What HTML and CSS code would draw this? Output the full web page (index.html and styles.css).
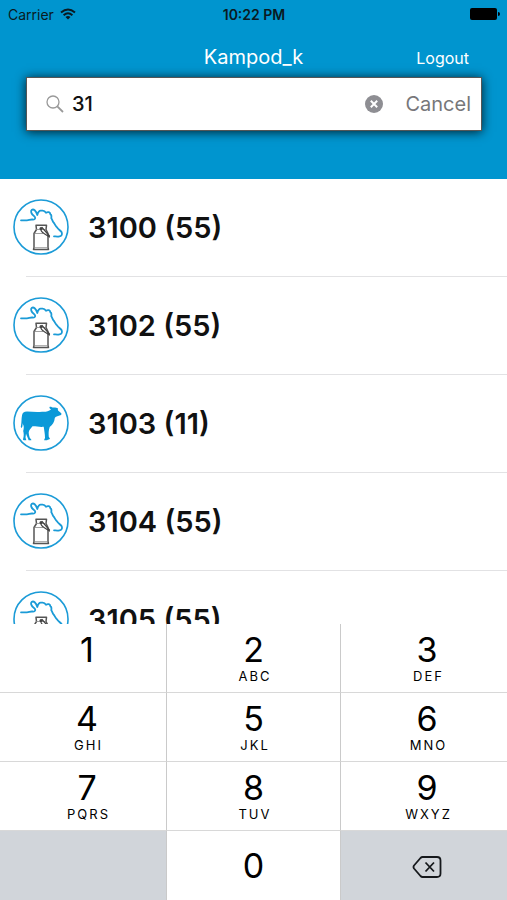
FILE: index.html
```html
<!DOCTYPE html>
<html lang="en">
<head>
    <meta charset="UTF-8">
    <meta name="viewport" content="width=device-width, initial-scale=1.0">
    <title>Kampod_k</title>
    <link rel="stylesheet" href="styles.css">
</head>
<body>

    <!-- Shared animal icons -->
    <svg class="icon-defs" aria-hidden="true">
        <symbol id="icon-milk" viewBox="0 0 56 56">
            <circle cx="28" cy="28" r="27" fill="#fff" stroke="#1b9bd7" stroke-width="1.6"/>
            <path d="M8 21.3H14C16 21.3 17 20.300 19.500 20.500C22.500 20.800 23 18.500 21 17C18 15 17.500 12 18.700 11C20.500 9.500 23 11.500 24.300 16C25 13.500 26 11.300 28 11.600C29.500 12 31 10.500 33 13.700C35 12.500 37 13 37.500 15.500C38.500 15.500 38.500 17.500 38.300 19.300C39.500 21 39.500 22.500 41 24C42 25.500 42.500 27 44.300 28.700C45.500 30.500 47.500 31.500 48.700 33.300C49.500 35.500 48.500 37.300 46.500 37.300C44.500 38 43 37.500 41 37.300" fill="none" stroke="#1b9bd7" stroke-width="1.8" stroke-linecap="round" stroke-linejoin="round"/>
            <path d="M23 26.300H33.500L33 30.500L35 34.500V48.500L35.500 50.500H20.500L21 48.500V34.500L23.500 30.500Z" fill="#fff" stroke="#555" stroke-width="1.5" stroke-linejoin="round"/>
            <path d="M23 30.500H33M21.500 34.500H30M21 48.700H35" fill="none" stroke="#888" stroke-width="0.8"/>
            <path d="M27.500 29.500Q28 33 31 34.500L36.500 38M29 28.500L33 33L36.500 37" fill="none" stroke="#444" stroke-width="1.2" stroke-linecap="round"/>
            <circle cx="28" cy="29.500" r="1.500" fill="#444"/>
        </symbol>
        <symbol id="icon-calf" viewBox="0 0 56 56">
            <circle cx="28" cy="28" r="27" fill="#fff" stroke="#1b9bd7" stroke-width="1.6"/>
            <path d="M9 20.500C9.300 18 11 16.800 14 16.600C19 16.800 25 17.300 29 16.700C32.500 17 35.500 16.500 38 14.500C36.500 13.500 36 12.300 36.800 11.800C38.500 11.600 39.500 12.800 41 12.500C42.500 12.500 44 12.500 45 13.500C44.800 14.500 44.800 15.200 45.300 15.800L48.300 18.200C48.800 19.500 48 20.300 46.500 20.400C44.500 21 42.500 21.300 41.800 23C41.500 27 39.500 30 36.700 32C35.500 35 35.500 39 35.800 42L37 43.500C36.500 44.700 35 44.300 34 45.300H31.200C31 44.500 31.800 43.800 32 43C32 39 31.300 36 30.700 31.800C27 32.300 23 31.200 19.500 31.300C18 33.500 15.800 35 15.700 37.500C15.800 40 16.500 42 17 43.300C18 44 18.500 44.800 18.300 45.300H15.600C15 42.500 13.500 41 13 38.500L12.500 42.500L13.300 45.300H11C9.800 45 9.800 44.200 10.200 43.500C11 40.500 10.800 38.500 10.200 36C10.800 34 11 32 10.500 30.500C10 29.500 9.700 29 9.700 28C9.500 30 9.600 32 8.700 33C7.800 32.500 7.700 31.500 8 30.500C8.700 27 8.300 24 9 20.500Z" fill="#0b99d8"/>
        </symbol>
    </svg>

    <!-- Header -->
    <header class="header">
        <div class="status-bar">
            <div class="carrier">
                <span>Carrier</span>
                <svg width="16" height="12" viewBox="0 0 16 12" fill="none" stroke="#0a1a22" stroke-width="2">
                    <path d="M1 4.500Q8 -1.500 15 4.500M3.600 7.200Q8 3.400 12.400 7.200"/>
                    <path d="M8 11.500L5.500 9Q8 7 10.500 9Z" fill="#0a1a22" stroke="none"/>
                </svg>
            </div>
            <span class="time">10:22 PM</span>
            <div class="battery">
                <svg width="30" height="12" viewBox="0 0 30 12" fill="#000">
                    <rect x="0" y="0" width="27" height="12" rx="2"/>
                    <path d="M28 4Q30 4 30 6T28 8Z"/>
                </svg>
            </div>
        </div>
        <div class="title-bar">
            <h1>Kampod_k</h1>
            <a href="#" class="logout">Logout</a>
        </div>
        <form class="search">
            <svg width="18" height="18" viewBox="0 0 18 18" fill="none" stroke="#999" stroke-width="1.3">
                <circle cx="7" cy="7" r="6"/>
                <path d="M11.300 11.300L17 17" stroke-width="1.800"/>
            </svg>
            <input type="text" value="31" aria-label="Search" inputmode="numeric">
            <button type="button" class="clear" aria-label="Clear">
                <svg width="18" height="18" viewBox="0 0 18 18">
                    <circle cx="9" cy="9" r="9" fill="#8e8e93"/>
                    <path d="M5.800 5.800L12.200 12.200M12.200 5.800L5.800 12.200" stroke="#fff" stroke-width="2"/>
                </svg>
            </button>
            <button type="button" class="cancel">Cancel</button>
        </form>
    </header>

    <!-- Results -->
    <ul class="results">
        <li><svg class="animal"><use href="#icon-milk"/></svg><span>3100 (55)</span></li>
        <li><svg class="animal"><use href="#icon-milk"/></svg><span>3102 (55)</span></li>
        <li><svg class="animal"><use href="#icon-calf"/></svg><span>3103 (11)</span></li>
        <li><svg class="animal"><use href="#icon-milk"/></svg><span>3104 (55)</span></li>
        <li><svg class="animal"><use href="#icon-milk"/></svg><span>3105 (55)</span></li>
    </ul>

    <!-- Number pad -->
    <div class="keypad">
        <button type="button">1<small></small></button>
        <button type="button">2<small>ABC</small></button>
        <button type="button">3<small>DEF</small></button>
        <button type="button">4<small>GHI</small></button>
        <button type="button">5<small>JKL</small></button>
        <button type="button">6<small>MNO</small></button>
        <button type="button">7<small>PQRS</small></button>
        <button type="button">8<small>TUV</small></button>
        <button type="button">9<small>WXYZ</small></button>
        <div class="blank"></div>
        <button type="button" class="zero">0</button>
        <button type="button" class="delete" aria-label="Delete">
            <svg width="30" height="22" viewBox="0 0 30 22" fill="none" stroke="#15181b" stroke-width="1.800" stroke-linejoin="round">
                <path d="M10.500 1H25Q28.500 1 28.500 4.500V17.500Q28.500 21 25 21H10.500Q9.500 21 8.500 20L2 12.500Q1 11 2 9.500L8.500 2Q9.500 1 10.500 1Z"/>
                <path d="M13.500 6.500L22 15.500M22 6.500L13.500 15.500"/>
            </svg>
        </button>
    </div>

</body>
</html>
```
FILE: styles.css
```css
* {
    margin: 0;
    padding: 0;
    box-sizing: border-box;
}
body {
    font-family: Inter, "Liberation Sans", sans-serif;
    display: flex;
    flex-direction: column;
    height: 100vh;
    background: white;
    color: #111;
}
button {
    font-family: inherit;
    border: none;
    background: none;
    cursor: pointer;
}
svg {
    display: block;
    flex-shrink: 0;
}
.icon-defs {
    width: 0;
    height: 0;
}
/* Header */
.header {
    background: #0095cf;
    padding-bottom: 48px;
}
.status-bar {
    display: grid;
    grid-template-columns: 1fr auto 1fr;
    align-items: center;
    height: 28px;
    padding: 0 7px 0 8px;
    font-size: 13px;
    color: #0a1a22;
}
.carrier {
    display: flex;
    align-items: center;
    gap: 6px;
}
.carrier span {
    font-size: 14px;
}
.time {
    font-weight: 600;
    font-size: 14px;
}
.battery {
    display: flex;
    justify-content: flex-end;
}
.title-bar {
    display: grid;
    grid-template-columns: 1fr auto 1fr;
    align-items: baseline;
    height: 49px;
    padding: 17px 38px 0;
    color: white;
}
.title-bar h1 {
    grid-column: 2;
    font-size: 20px;
    line-height: 24px;
    font-weight: 400;
}
.logout {
    justify-self: end;
    font-size: 16px;
    color: white;
    text-decoration: none;
}
.search {
    display: flex;
    align-items: center;
    height: 54px;
    margin: 0 25px 0 26px;
    padding: 0 10px 0 19px;
    background: white;
    border: 1px solid #555;
    box-shadow: 0 1px 10px rgba(0, 0, 0, 0.8);
}
.search input {
    flex: 1;
    min-width: 0;
    margin-left: 8px;
    border: none;
    outline: none;
    font-family: inherit;
    font-size: 20px;
    font-weight: 500;
    color: #111;
}
.cancel {
    margin-left: 22px;
    font-size: 20px;
    color: #77777a;
}
/* Results list */
.results {
    flex: 1;
    min-height: 0;
    overflow: hidden;
    list-style-type: none;
}
.results li {
    display: flex;
    align-items: center;
    gap: 19px;
    height: 98px;
    padding: 0 0 2px 13px;
    font-size: 29px;
    font-weight: 600;
    background: linear-gradient(#e2e2e4, #e2e2e4) 26px 100% / 100% 1px no-repeat;
}
.animal {
    width: 56px;
    height: 56px;
}
/* Number pad */
.keypad {
    display: grid;
    grid-template-columns: 167fr 174fr 166fr;
    grid-auto-rows: 69px;
}
.keypad button,
.blank {
    border-right: 1px solid #cacaca;
    border-bottom: 1px solid #d8d8d8;
}
.keypad button {
    display: flex;
    flex-direction: column;
    align-items: center;
    padding-top: 8px;
    background: white;
    font-size: 34px;
    line-height: 36px;
    color: #000;
}
.keypad button:nth-child(3n+1) {
    padding-left: 8px;
}
.keypad button:nth-child(3n) {
    padding-left: 6px;
    border-right: none;
}
.keypad small {
    padding-left: 3px;
    font-size: 13px;
    line-height: 16px;
    letter-spacing: 2px;
}
.keypad .zero {
    justify-content: center;
    padding-top: 0;
    border-bottom: none;
}
.blank,
.keypad .delete {
    background: #d1d5da;
    border-bottom: none;
}
.keypad .delete {
    justify-content: center;
    padding: 3px 0 0;
}
```
